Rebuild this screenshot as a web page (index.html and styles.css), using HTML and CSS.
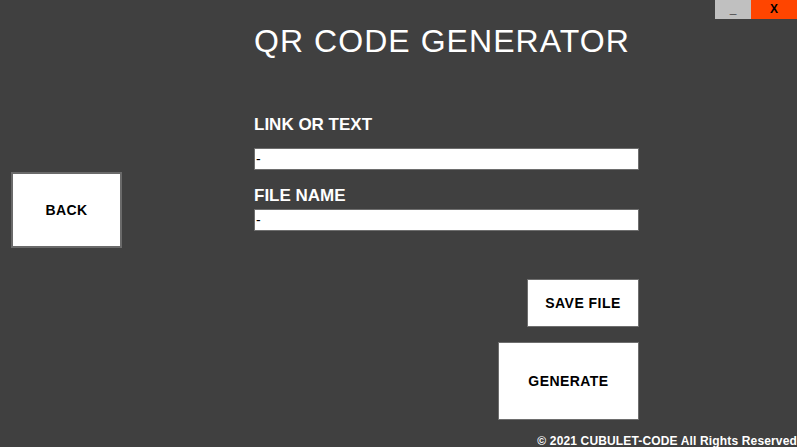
FILE: index.html
```html
<!DOCTYPE html>
<html lang="en">
<head>
<meta charset="utf-8">
<title>QR Code Generator</title>
<link rel="stylesheet" href="styles.css">
</head>
<body>
<div class="window">
  <div class="controls">
    <button class="ctl ctl-min">_</button>
    <button class="ctl ctl-close">X</button>
  </div>
  <div class="content">
    <div class="side">
      <button class="btn btn-back">BACK</button>
    </div>
    <div class="main">
      <h1 class="title">QR CODE GENERATOR</h1>
      <label class="label label-link">LINK OR TEXT</label>
      <input class="field field-link" type="text" value="-">
      <label class="label label-file">FILE NAME</label>
      <input class="field field-file" type="text" value="-">
      <div class="actions">
        <button class="btn btn-save">SAVE FILE</button>
        <button class="btn btn-generate">GENERATE</button>
      </div>
    </div>
  </div>
  <footer class="footer">© 2021 CUBULET-CODE All Rights Reserved</footer>
</div>
</body>
</html>
```
FILE: styles.css
```css
html, body {
  margin: 0;
  padding: 0;
}
body {
  background: #404040;
  font-family: "Liberation Sans", Arial, sans-serif;
  overflow: hidden;
}
.window {
  position: relative;
  width: 797px;
  height: 447px;
  display: flex;
  flex-direction: column;
  overflow: hidden;
}
.controls {
  position: absolute;
  top: 0;
  right: 0;
  display: flex;
}
.ctl {
  border: none;
  margin: 0;
  padding: 0;
  height: 19px;
  font-family: "Liberation Sans", Arial, sans-serif;
  font-weight: bold;
  color: #000;
  cursor: pointer;
}
.ctl-min {
  width: 36px;
  background: #c0c0c0;
  font-size: 12px;
  line-height: 12px;
  padding-bottom: 2px;
}
.ctl-close {
  width: 46px;
  background: #ff4500;
  font-size: 12px;
  line-height: 19px;
}
.content {
  display: flex;
  flex-direction: row;
}
.side {
  width: 254px;
  padding-left: 11px;
  padding-top: 172px;
  box-sizing: border-box;
}
.btn {
  background: #fff;
  color: #000;
  font-family: "Liberation Sans", Arial, sans-serif;
  font-weight: bold;
  font-size: 14px;
  letter-spacing: 0.45px;
  margin: 0;
  padding: 0;
  box-sizing: border-box;
  cursor: pointer;
}
.btn-back {
  width: 111px;
  height: 76px;
  border: 2px solid #6a6a6a;
}
.main {
  width: 385px;
  display: flex;
  flex-direction: column;
}
.title {
  margin: 23px 0 0 0;
  font-size: 32px;
  line-height: 36px;
  font-weight: normal;
  letter-spacing: 1.05px;
  color: #fff;
  white-space: nowrap;
}
.label {
  display: block;
  color: #fff;
  font-size: 17px;
  font-weight: bold;
  line-height: 20px;
  white-space: nowrap;
}
.label-link {
  margin-top: 56px;
}
.label-file {
  margin-top: 16px;
}
.field {
  display: block;
  width: 385px;
  height: 22px;
  box-sizing: border-box;
  border: 1px solid #6e6e6e;
  background: #fff;
  color: #000;
  font-family: "Liberation Sans", Arial, sans-serif;
  font-size: 14px;
  padding: 0 0 0 1px;
  margin: 0;
  outline: none;
}
.field-link {
  margin-top: 13px;
}
.field-file {
  margin-top: 3px;
}
.actions {
  display: flex;
  flex-direction: column;
  align-items: flex-end;
  margin-top: 48px;
}
.btn-save {
  width: 112px;
  height: 48px;
  border: 1px solid #6e6e6e;
}
.btn-generate {
  width: 141px;
  height: 78px;
  margin-top: 15px;
  border: 1px solid #6e6e6e;
}
.footer {
  margin-top: auto;
  text-align: right;
  color: #fff;
  font-weight: bold;
  font-size: 12px;
  line-height: 12px;
  letter-spacing: 0.15px;
  white-space: nowrap;
}
```
